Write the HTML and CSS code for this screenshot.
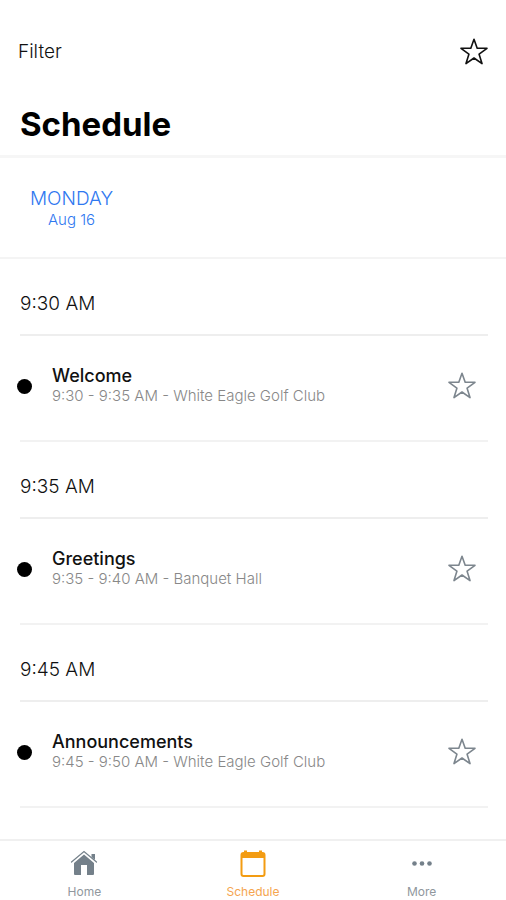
FILE: index.html
```
<!DOCTYPE html>
<html lang="en">
<head>
    <meta charset="UTF-8">
    <meta name="viewport" content="width=device-width, initial-scale=1.0">
    <title>Schedule</title>
    <link rel="stylesheet" href="styles.css">
</head>
<body>
    <!-- shared star icon -->
    <svg class="sprite" aria-hidden="true">
        <symbol id="star" viewBox="0 0 28 28">
            <path d="M14 1.2L17.2 10.3H27L19.1 16.2L22 25.6L14 20L6 25.600L8.900 16.200L1 10.300H10.800Z"/>
        </symbol>
    </svg>

    <div class="app">
        <header class="header">
            <div class="toolbar">
                <button class="filter" type="button">Filter</button>
                <button class="star star-dark" type="button" aria-label="Favorites"><svg><use href="#star"/></svg></button>
            </div>
            <h1>Schedule</h1>
        </header>

        <nav class="days">
            <a class="day" href="#monday">
                <span class="day-name">MONDAY</span>
                <span class="day-date">Aug 16</span>
            </a>
        </nav>

        <main class="slots" id="monday">
            <section>
                <h2>9:30 AM</h2>
                <div class="session">
                    <span class="dot"></span>
                    <div class="info">
                        <h3>Welcome</h3>
                        <p>9:30 - 9:35 AM - White Eagle Golf Club</p>
                    </div>
                    <button class="star" type="button" aria-label="Favorite Welcome"><svg><use href="#star"/></svg></button>
                </div>
            </section>
            <section>
                <h2>9:35 AM</h2>
                <div class="session">
                    <span class="dot"></span>
                    <div class="info">
                        <h3>Greetings</h3>
                        <p>9:35 - 9:40 AM - Banquet Hall</p>
                    </div>
                    <button class="star" type="button" aria-label="Favorite Greetings"><svg><use href="#star"/></svg></button>
                </div>
            </section>
            <section>
                <h2>9:45 AM</h2>
                <div class="session">
                    <span class="dot"></span>
                    <div class="info">
                        <h3>Announcements</h3>
                        <p>9:45 - 9:50 AM - White Eagle Golf Club</p>
                    </div>
                    <button class="star" type="button" aria-label="Favorite Announcements"><svg><use href="#star"/></svg></button>
                </div>
            </section>
        </main>

        <nav class="tabs">
            <a class="tab" href="#home">
                <svg viewBox="0 0 28 28">
                    <path fill="currentColor" d="M14 5.500L24 14V25a1 1 0 0 1-1 1H17V16h-6v10H5a1 1 0 0 1-1-1V14Z"/>
                    <path fill="none" stroke="currentColor" stroke-width="1.2" stroke-linecap="round" d="M1.500 13L14 2.500L26.500 13"/>
                    <path fill="currentColor" d="M21.500 5H25V11L21.500 8Z"/>
                </svg>
                <span>Home</span>
            </a>
            <a class="tab active" href="#schedule">
                <svg viewBox="0 0 28 28">
                    <rect x="2.500" y="4" width="23" height="23" rx="2" fill="none" stroke="currentColor" stroke-width="2"/>
                    <path fill="currentColor" d="M2 4h24v5H2ZM5 1.500h3v4H5ZM20 1.500h3v4h-3Z"/>
                </svg>
                <span>Schedule</span>
            </a>
            <a class="tab" href="#more">
                <svg viewBox="0 0 28 28" fill="currentColor">
                    <circle cx="6.500" cy="14.500" r="2.300"/>
                    <circle cx="14" cy="14.500" r="2.300"/>
                    <circle cx="21.500" cy="14.500" r="2.300"/>
                </svg>
                <span>More</span>
            </a>
        </nav>
    </div>
</body>
</html>
```

FILE: styles.css
```
* { box-sizing: border-box; }
body { margin: 0; background: #fff; color: #111; font-family: Inter, "Liberation Sans", sans-serif; }
h1, h2, h3, p { margin: 0; font-weight: 400; }
button { border: 0; padding: 0; background: none; color: inherit; font: inherit; cursor: pointer; }
a { color: inherit; text-decoration: none; }
.sprite { position: absolute; width: 0; height: 0; }

.app { display: flex; flex-direction: column; min-height: 100vh; }

.header { padding: 36px 18px 11px 20px; border-bottom: 3px solid #f6f6f6; }
.toolbar { display: flex; justify-content: space-between; align-items: center; margin-left: -2px; height: 32px; }
.filter { font-size: 19px; line-height: 24px; font-weight: 300; }
h1 { margin-top: 36px; font-size: 33px; line-height: 40px; font-weight: 700; color: #000; }

.star { width: 28px; height: 28px; color: #7d868e; }
.star svg { display: block; width: 100%; height: 100%; fill: none; stroke: currentColor; stroke-width: 1.6; stroke-linejoin: round; }
.star-dark { color: #111; }

.days { display: flex; height: 101px; padding: 29px 30px; border-bottom: 2px solid #f4f4f4; }
.day { display: flex; flex-direction: column; align-items: center; color: #2f78f0; }
.day-name { font-size: 19px; line-height: 24px; font-weight: 300; }
.day-date { font-size: 15px; line-height: 18px; font-weight: 300; }

.slots { flex: 1; padding: 0 18px 0 20px; }
h2 { height: 77px; padding-top: 33px; border-bottom: 2px solid #eee; font-size: 19px; line-height: 24px; font-weight: 300; }
.session { display: flex; align-items: center; height: 106px; padding: 0 12px 4px 0; border-bottom: 2px solid #f2f2f2; }
.dot { width: 15px; height: 15px; margin-left: -3px; border-radius: 50%; background: #000; }
.info { flex: 1; margin-left: 20px; }
h3 { font-size: 18px; line-height: 20px; font-weight: 500; }
.info p { font-size: 15px; line-height: 20px; font-weight: 300; color: #888; }

.tabs { display: flex; height: 61px; padding-top: 8px; border-top: 2px solid #f0f0f0; }
.tab { flex: 1; display: flex; flex-direction: column; align-items: center; color: #74808a; }
.tab svg { width: 28px; height: 28px; }
.tab span { margin-top: 7px; font-size: 12px; line-height: 16px; color: #90979d; }
.tab.active { color: #f39c12; }
.tab.active span { color: #f5a550; }
```
